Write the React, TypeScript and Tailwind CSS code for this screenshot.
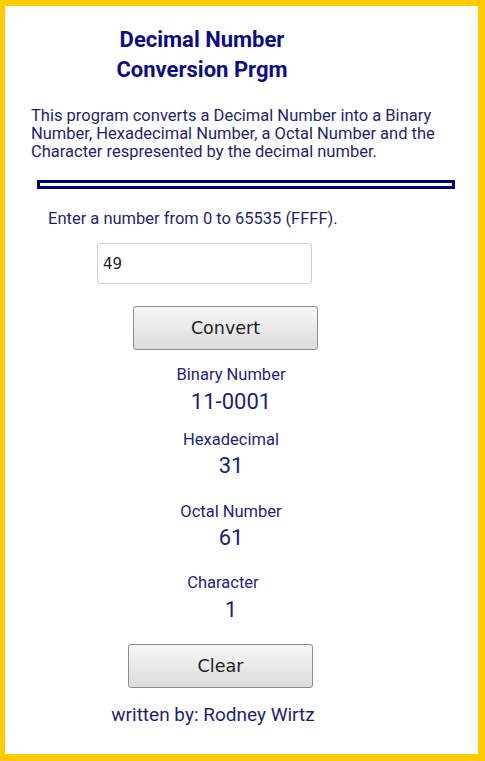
import { useState } from "react";

// decimal -> binary grouped in 4s, e.g. 49 -> 11-0001
function toBinary(n: number) {
  const bits = n.toString(2);
  const groups: string[] = [];
  for (let i = bits.length; i > 0; i -= 4) groups.unshift(bits.slice(Math.max(0, i - 4), i));
  return groups.join("-");
}

function Result({ label, value, labelTop, valueTop }: { label: string; value: string; labelTop: string; valueTop: string }) {
  return (
    <div className="flex flex-col items-center">
      <div className={`${labelTop} text-[16.5px] leading-[20px] text-[#23237a]`}>{label}</div>
      <div className={`${valueTop} text-[22px] leading-[24px] text-[#1d1d78]`}>{value}</div>
    </div>
  );
}

export default function App() {
  const [input, setInput] = useState("49");
  const [num, setNum] = useState<number | null>(49);

  const convert = () => {
    const n = parseInt(input, 10);
    setNum(isNaN(n) || n < 0 || n > 65535 ? null : n);
  };

  const clear = () => {
    setInput("");
    setNum(null);
  };

  return (
    <div className="w-[485px] h-[761px] bg-white border-l-[5px] border-t-[6px] border-r-[7px] border-b-[7px] border-[#FFCC00] font-['Roboto',sans-serif] overflow-hidden">
      {/* Title */}
      <div className="ml-[67px] mt-[19px] w-[260px] text-center text-[22px] leading-[30px] font-bold text-[#0c0c88]">
        <div>Decimal Number</div>
        <div>Conversion Prgm</div>
      </div>

      <p className="ml-[26px] mt-[22px] w-[440px] text-[16.5px] leading-[18px] text-[#1f1f70]">
        This program converts a Decimal Number into a Binary Number, Hexadecimal Number, a Octal Number and the Character respresented by the decimal number.
      </p>

      {/* Divider */}
      <div className="ml-[32px] mt-[19px] w-[418px] h-[9px] border-[3px] border-[#00007f] bg-white" />

      <div className="ml-[43px] mt-[21px] text-[16.5px] leading-[18px] text-[#1f1f70]">
        Enter a number from 0 to 65535 (FFFF).
      </div>

      <input
        value={input}
        onChange={(e) => setInput(e.target.value)}
        className="block ml-[92px] mt-[15px] w-[215px] h-[41px] px-[5px] rounded-[3px] border border-[#d0d0d0] bg-white font-['DejaVu_Sans',sans-serif] text-[15px] text-[#222] outline-none"
      />

      <button
        onClick={convert}
        className="block ml-[128px] mt-[22px] w-[185px] h-[44px] rounded-[3px] border border-[#8c8c8c] bg-gradient-to-b from-[#f7f7f7] to-[#dcdcdc] font-['DejaVu_Sans',sans-serif] text-[17.5px] text-[#222]"
      >
        Convert
      </button>

      {/* Results */}
      <div className="ml-[126px] w-[200px]">
        <Result label="Binary Number" value={num === null ? "" : toBinary(num)} labelTop="mt-[15px]" valueTop="mt-[5px]" />
        <Result label="Hexadecimal" value={num === null ? "" : num.toString(16).toUpperCase()} labelTop="mt-[16px]" valueTop="mt-[4px]" />
        <Result label="Octal Number" value={num === null ? "" : num.toString(8)} labelTop="mt-[24px]" valueTop="mt-[4px]" />
        <Result label="Character" value={num === null ? "" : String.fromCharCode(num)} labelTop="mt-[23px] -translate-x-[8px]" valueTop="mt-[5px]" />
      </div>

      <button
        onClick={clear}
        className="block ml-[123px] mt-[22px] w-[185px] h-[44px] rounded-[3px] border border-[#8c8c8c] bg-gradient-to-b from-[#f7f7f7] to-[#dcdcdc] font-['DejaVu_Sans',sans-serif] text-[17.5px] text-[#222]"
      >
        Clear
      </button>

      <div className="ml-[78px] mt-[16px] w-[260px] text-center text-[19px] leading-[22px] text-[#1f1f70]">
        written by: Rodney Wirtz
      </div>
    </div>
  );
}
